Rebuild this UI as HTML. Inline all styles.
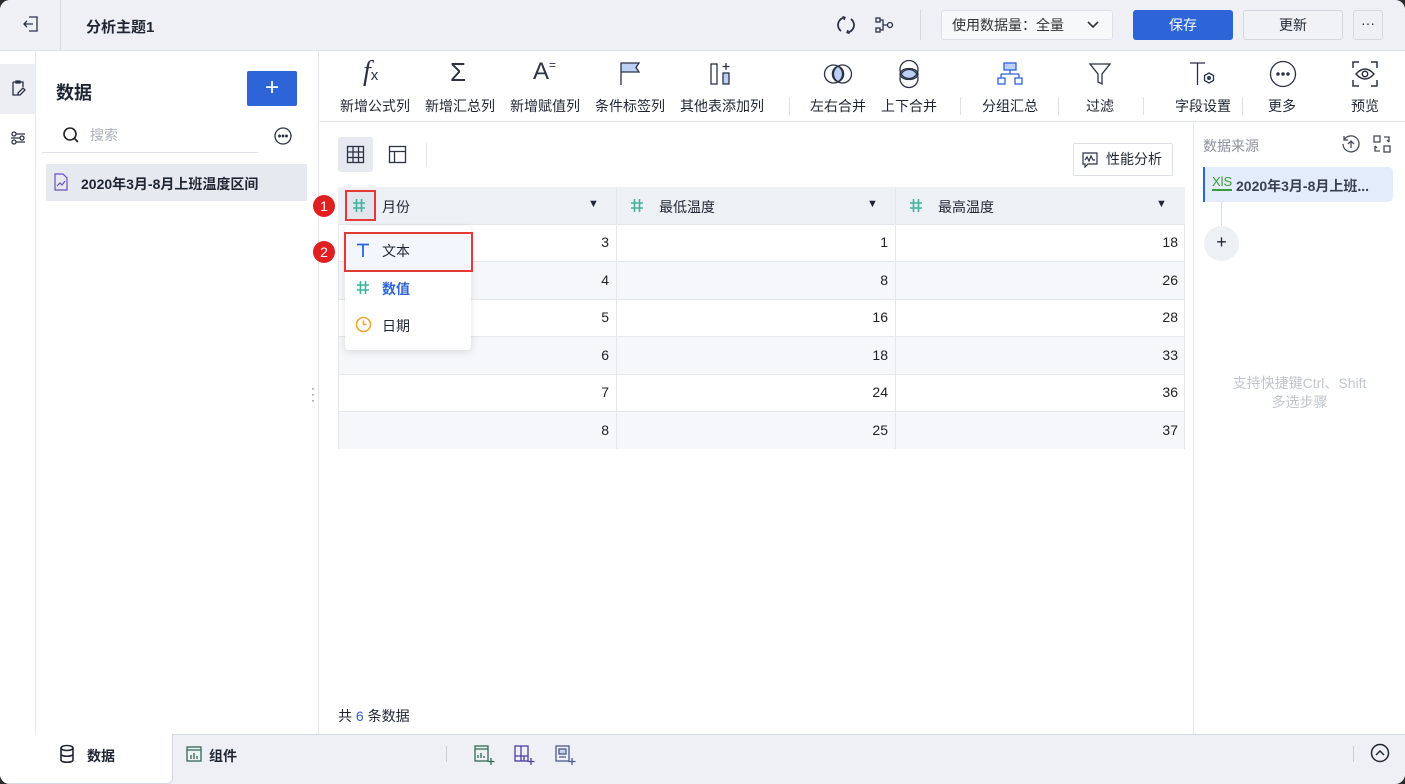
<!DOCTYPE html>
<html><head><meta charset="utf-8"><style>
*{margin:0;padding:0;box-sizing:border-box}
body{width:1405px;height:784px;overflow:hidden;background:#2b2b2b;font-family:"Liberation Sans","Noto Sans CJK SC",sans-serif;color:#1f2633;font-size:14px}
.app{position:absolute;left:0;top:0;width:1405px;height:784px;background:#fff;border-radius:10px;overflow:hidden}
.a{position:absolute}
.tb{text-align:center;font-size:14px;color:#1f2633;width:90px;margin-left:-45px;top:96px}
.sep{position:absolute;top:97px;width:1px;height:18px;background:#dde0e6}
.cell{position:absolute;height:37px;line-height:37px;text-align:right;font-size:14px;color:#222}
</style></head><body><div class="app">
<svg width="0" height="0" style="position:absolute"><defs><g id="hash"><path d="M5.5 2v13M10.5 2v13M2 6h12M2 11h12" stroke="#3fb39b" stroke-width="1.6" fill="none"/></g></defs></svg>
<!-- top bar -->
<div class="a" style="left:0;top:0;width:1405px;height:51px;background:#eef0f5;border-bottom:1px solid #dde1e8"></div>
<div class="a" style="left:60px;top:0;width:1px;height:50px;background:#d8dce3"></div>
<svg class="a" style="left:21px;top:14px" width="20" height="20" viewBox="0 0 20 20" fill="none" stroke="#2a3244" stroke-width="1.3"><path d="M8 3h8v14H8M3 10h9M6 7l-3 3 3 3"/></svg>
<div class="a" style="left:86px;top:16px;font-size:15px;font-weight:bold">分析主题1</div>
<svg class="a" style="left:835px;top:14px" width="22" height="22" viewBox="0 0 22 22" fill="none" stroke="#2a3244" stroke-width="1.8"><path d="M16 5a7.5 7.5 0 0 1-4 13.5M6 17A7.5 7.5 0 0 1 10 3.5"/><path d="M13 16l-1 2.5 2.5 1M9 6l1-2.5-2.5-1" stroke-width="1.4"/></svg>
<svg class="a" style="left:874px;top:15px" width="22" height="20" viewBox="0 0 22 20" fill="none" stroke="#2a3244" stroke-width="1.3"><rect x="2" y="3" width="4" height="4"/><rect x="2" y="13" width="4" height="4"/><circle cx="16" cy="10" r="2.5"/><path d="M6 5h3v10H6M9 10h4.5"/></svg>
<div class="a" style="left:920px;top:10px;width:1px;height:30px;background:#d3d7de"></div>
<div class="a" style="left:941px;top:10px;width:172px;height:30px;background:#f7f8fa;border:1px solid #dde0e6;border-radius:3px;line-height:28px;padding-left:10px;font-size:14px;color:#333">使用数据量：全量<svg style="position:absolute;left:144px;top:8px" width="14" height="12" viewBox="0 0 14 12" fill="none" stroke="#333" stroke-width="1.6"><path d="M2 3l5 5 5-5"/></svg></div>
<div class="a" style="left:1133px;top:10px;width:100px;height:30px;background:#2d64d8;border-radius:3px;color:#fff;text-align:center;line-height:30px;font-size:14px">保存</div>
<div class="a" style="left:1243px;top:10px;width:100px;height:30px;background:#f1f2f5;border:1px solid #d5d8de;border-radius:3px;text-align:center;line-height:28px;font-size:14px">更新</div>
<div class="a" style="left:1353px;top:10px;width:30px;height:30px;border:1px solid #d5d8de;border-radius:3px;text-align:center;line-height:24px;font-size:14px">···</div>
<!-- left strip -->
<div class="a" style="left:0;top:51px;width:36px;height:683px;border-right:1px solid #e5e8ee"></div>
<div class="a" style="left:0;top:64px;width:35px;height:50px;background:#eceef3"></div>
<svg class="a" style="left:9px;top:79px" width="18" height="18" viewBox="0 0 18 18" fill="none" stroke="#2a3244" stroke-width="1.3"><path d="M4 3h10v5M4 3v13h5M7 2h4v2H7zM9 14l5-5 2 2-5 5H9z"/></svg>
<svg class="a" style="left:9px;top:129px" width="18" height="18" viewBox="0 0 18 18" fill="none" stroke="#2a3244" stroke-width="1.3"><circle cx="5" cy="5" r="2"/><circle cx="13" cy="9" r="2"/><circle cx="5" cy="13" r="2"/><path d="M7 5h9M2 9h9M7 13h9"/></svg>
<!-- left panel -->
<div class="a" style="left:318px;top:51px;width:1px;height:683px;background:#e3e6eb"></div>
<div class="a" style="left:56px;top:79px;font-size:18px;font-weight:bold">数据</div>
<div class="a" style="left:247px;top:71px;width:50px;height:35px;background:#2d64d8;border-radius:2px;color:#fff;font-size:24px;text-align:center;line-height:33px">+</div>
<svg class="a" style="left:62px;top:126px" width="18" height="18" viewBox="0 0 18 18" fill="none" stroke="#222" stroke-width="1.6"><circle cx="8" cy="8" r="6"/><path d="M12.5 12.5L16 16"/></svg>
<div class="a" style="left:90px;top:125px;font-size:14px;color:#aab0ba">搜索</div>
<div class="a" style="left:42px;top:152px;width:216px;height:1px;background:#dfe2e8"></div>
<svg class="a" style="left:273px;top:126px" width="20" height="20" viewBox="0 0 20 20" fill="none" stroke="#2a3244" stroke-width="1.3"><circle cx="10" cy="10" r="8"/><circle cx="6.5" cy="10" r=".8" fill="#2a3244"/><circle cx="10" cy="10" r=".8" fill="#2a3244"/><circle cx="13.5" cy="10" r=".8" fill="#2a3244"/></svg>
<div class="a" style="left:46px;top:164px;width:261px;height:37px;background:#e6e9f0"></div>
<svg class="a" style="left:53px;top:173px" width="16" height="18" viewBox="0 0 16 18" fill="none" stroke="#6a4fc0" stroke-width="1.2"><path d="M2 1h8l4 4v12H2z"/><path d="M4 13l3-3 2 2 3-4"/></svg>
<div class="a" style="left:81px;top:174px;font-size:14px;font-weight:bold">2020年3月-8月上班温度区间</div>
<div class="a" style="left:311px;top:385px;color:#555;font-size:12px;line-height:6px">·<br>·<br>·</div>
<!-- toolbar -->
<div class="a" style="left:319px;top:121px;width:1086px;height:1px;background:#e3e6eb"></div>
<div class="a" style="left:363px;top:56px;font-size:28px;font-style:italic;font-family:'Liberation Serif',serif;color:#2a3244">f<span style="font-size:15px;font-style:normal;font-family:'Liberation Sans'">x</span></div>
<div class="a" style="left:450px;top:57px;font-size:26px;color:#2a3244">Σ</div>
<div class="a" style="left:533px;top:58px;font-size:24px;color:#2a3244">A<span style="font-size:12px;vertical-align:top">=</span></div>
<svg class="a" style="left:618px;top:61px" width="24" height="26" viewBox="0 0 24 26" fill="none" stroke="#2a3244" stroke-width="1.3"><path d="M3 24V2h18l-3 4.5 3 4.5H3" fill="#bcd0f5"/></svg>
<svg class="a" style="left:708px;top:61px" width="28" height="26" viewBox="0 0 28 26" fill="none" stroke="#2a3244" stroke-width="1.3"><rect x="3" y="3" width="6" height="20"/><rect x="15" y="12" width="6" height="11" fill="#bcd0f5"/><path d="M18 2v7M14.5 5.5h7"/></svg>
<div class="sep" style="left:789px"></div>
<svg class="a" style="left:823px;top:60px" width="30" height="28" viewBox="0 0 30 28" fill="none" stroke="#2a3244" stroke-width="1.3"><path d="M15 6a8.5 8.5 0 0 1 0 16a8.5 8.5 0 0 1 0-16" fill="#bcd0f5"/><circle cx="10.5" cy="14" r="9"/><circle cx="19.5" cy="14" r="9"/></svg>
<svg class="a" style="left:895px;top:58px" width="28" height="32" viewBox="0 0 28 32" fill="none" stroke="#2a3244" stroke-width="1.3"><path d="M5 16a9 5.5 0 0 1 18 0a9 5.5 0 0 1-18 0" fill="#bcd0f5"/><circle cx="14" cy="11.5" r="9"/><circle cx="14" cy="20.5" r="9"/></svg>
<div class="sep" style="left:960px"></div>
<svg class="a" style="left:996px;top:61px" width="28" height="26" viewBox="0 0 28 26" fill="none" stroke="#2d64d8" stroke-width="1.3"><rect x="8" y="2" width="12" height="7" fill="#bcd0f5"/><path d="M14 9v4M5 13h18M5 13v4M23 13v4"/><rect x="2" y="17" width="7" height="6"/><rect x="19" y="17" width="7" height="6"/></svg>
<div class="sep" style="left:1058px"></div>
<svg class="a" style="left:1087px;top:61px" width="26" height="26" viewBox="0 0 26 26" fill="none" stroke="#2a3244" stroke-width="1.3"><path d="M3 3h20l-8 10v10l-4-2v-8z"/></svg>
<div class="sep" style="left:1143px"></div>
<svg class="a" style="left:1188px;top:60px" width="30" height="28" viewBox="0 0 30 28" fill="none" stroke="#2a3244" stroke-width="1.3"><path d="M2 3h15M9.5 3v22"/><path d="M21 13l4.5 2.5v5L21 23l-4.5-2.5v-5z"/><circle cx="21" cy="18" r="1.3" fill="#2d64d8"/></svg>
<div class="sep" style="left:1242px"></div>
<svg class="a" style="left:1268px;top:59px" width="30" height="30" viewBox="0 0 30 30" fill="none" stroke="#2a3244" stroke-width="1.3"><circle cx="15" cy="15" r="12.5"/><circle cx="10" cy="15" r="1.1" fill="#2a3244"/><circle cx="15" cy="15" r="1.1" fill="#2a3244"/><circle cx="20" cy="15" r="1.1" fill="#2a3244"/></svg>
<svg class="a" style="left:1351px;top:60px" width="28" height="28" viewBox="0 0 28 28" fill="none" stroke="#2a3244" stroke-width="1.5"><path d="M2 8V2h6M20 2h6v6M26 20v6h-6M8 26H2v-6"/><path d="M5 14q9-10 18 0q-9 10-18 0z"/><circle cx="14" cy="14" r="2.7"/></svg>
<div class="a tb" style="left:375px">新增公式列</div>
<div class="a tb" style="left:460px">新增汇总列</div>
<div class="a tb" style="left:545px">新增赋值列</div>
<div class="a tb" style="left:630px">条件标签列</div>
<div class="a tb" style="left:722px;width:100px;margin-left:-50px">其他表添加列</div>
<div class="a tb" style="left:838px">左右合并</div>
<div class="a tb" style="left:909px">上下合并</div>
<div class="a tb" style="left:1010px">分组汇总</div>
<div class="a tb" style="left:1100px">过滤</div>
<div class="a tb" style="left:1203px">字段设置</div>
<div class="a tb" style="left:1282px">更多</div>
<div class="a tb" style="left:1365px">预览</div>
<!-- main -->
<div class="a" style="left:338px;top:137px;width:35px;height:35px;background:#e6e9ef;border-radius:3px"></div>
<svg class="a" style="left:346px;top:145px" width="19" height="19" viewBox="0 0 19 19" fill="none" stroke="#2a3244" stroke-width="1.3"><rect x="1.5" y="1.5" width="16" height="16"/><path d="M1.5 7h16M1.5 12.5h16M7 1.5v16M12.5 1.5v16"/></svg>
<svg class="a" style="left:388px;top:145px" width="19" height="19" viewBox="0 0 19 19" fill="none" stroke="#2a3244" stroke-width="1.3"><rect x="1.5" y="1.5" width="16" height="16"/><path d="M1.5 6.5h16M6.5 6.5v11"/></svg>
<div class="a" style="left:426px;top:143px;width:1px;height:24px;background:#e3e6eb"></div>
<div class="a" style="left:1073px;top:143px;width:100px;height:33px;border:1px solid #dcdfe5;border-radius:2px;line-height:31px;padding-left:32px;font-size:14px">性能分析<svg style="position:absolute;left:8px;top:8px" width="16" height="16" viewBox="0 0 16 16" fill="none" stroke="#2a3244" stroke-width="1.2"><path d="M1 1h14v11H6l-3 3v-3H1z"/><path d="M3 8l2-3 2 4 2-5 2 4h2"/></svg></div>
<!-- table -->
<div class="a" style="left:338px;top:187px;width:847px;height:262px;border:1px solid #e4e7ec;background:#fff"></div>
<div class="a" style="left:338px;top:187px;width:847px;height:37px;background:#edf0f5"></div>
<div class="a" style="left:339px;top:262px;width:845px;height:37px;background:#f6f7fa"></div>
<div class="a" style="left:339px;top:337px;width:845px;height:37px;background:#f6f7fa"></div>
<div class="a" style="left:339px;top:412px;width:845px;height:37px;background:#f6f7fa"></div>
<div class="a" style="left:339px;top:224px;width:845px;height:1px;background:#e4e7ec"></div>
<div class="a" style="left:339px;top:261px;width:845px;height:1px;background:#e4e7ec"></div>
<div class="a" style="left:339px;top:299px;width:845px;height:1px;background:#e4e7ec"></div>
<div class="a" style="left:339px;top:336px;width:845px;height:1px;background:#e4e7ec"></div>
<div class="a" style="left:339px;top:374px;width:845px;height:1px;background:#e4e7ec"></div>
<div class="a" style="left:339px;top:411px;width:845px;height:1px;background:#e4e7ec"></div>
<div class="a" style="left:616px;top:187px;width:1px;height:262px;background:#e4e7ec"></div>
<div class="a" style="left:895px;top:187px;width:1px;height:262px;background:#e4e7ec"></div>
<div class="a" style="left:345px;top:190px;width:31px;height:31px;border:2px solid #e53935;background:#e2e5eb"></div>
<svg class="a" style="left:351px;top:197px" width="16" height="17"><use href="#hash"/></svg>
<div class="a" style="left:382px;top:197px">月份</div>
<div class="a" style="left:588px;top:198px;font-size:11px">▼</div>
<svg class="a" style="left:629px;top:197px" width="16" height="17"><use href="#hash"/></svg>
<div class="a" style="left:659px;top:197px">最低温度</div>
<div class="a" style="left:867px;top:198px;font-size:11px">▼</div>
<svg class="a" style="left:908px;top:197px" width="16" height="17"><use href="#hash"/></svg>
<div class="a" style="left:938px;top:197px">最高温度</div>
<div class="a" style="left:1156px;top:198px;font-size:11px">▼</div>
<div class="a" style="left:313px;top:195px;width:22px;height:22px;border-radius:50%;background:#e02020;color:#fff;font-size:14px;text-align:center;line-height:22px">1</div>
<div class="a" style="left:313px;top:241px;width:22px;height:22px;border-radius:50%;background:#e02020;color:#fff;font-size:14px;text-align:center;line-height:22px">2</div>
<div class="cell" style="left:340px;top:224px;width:269px">3</div><div class="cell" style="left:618px;top:224px;width:270px">1</div><div class="cell" style="left:897px;top:224px;width:281px">18</div>
<div class="cell" style="left:340px;top:262px;width:269px">4</div><div class="cell" style="left:618px;top:262px;width:270px">8</div><div class="cell" style="left:897px;top:262px;width:281px">26</div>
<div class="cell" style="left:340px;top:299px;width:269px">5</div><div class="cell" style="left:618px;top:299px;width:270px">16</div><div class="cell" style="left:897px;top:299px;width:281px">28</div>
<div class="cell" style="left:340px;top:337px;width:269px">6</div><div class="cell" style="left:618px;top:337px;width:270px">18</div><div class="cell" style="left:897px;top:337px;width:281px">33</div>
<div class="cell" style="left:340px;top:374px;width:269px">7</div><div class="cell" style="left:618px;top:374px;width:270px">24</div><div class="cell" style="left:897px;top:374px;width:281px">36</div>
<div class="cell" style="left:340px;top:412px;width:269px">8</div><div class="cell" style="left:618px;top:412px;width:270px">25</div><div class="cell" style="left:897px;top:412px;width:281px">37</div>
<!-- dropdown -->
<div class="a" style="left:345px;top:226px;width:126px;height:124px;background:#fff;border-radius:4px;box-shadow:0 2px 8px rgba(0,0,0,.12)"></div>
<div class="a" style="left:344px;top:232px;width:129px;height:40px;border:2px solid #e53935;background:#f3f7fd"></div>
<svg class="a" style="left:355px;top:242px" width="16" height="16" viewBox="0 0 16 16" fill="none" stroke="#2d64d8" stroke-width="1.8"><path d="M2 2.5h12M8 2.5V15"/></svg>
<div class="a" style="left:382px;top:241px">文本</div>
<svg class="a" style="left:355px;top:279px" width="16" height="17"><use href="#hash"/></svg>
<div class="a" style="left:382px;top:279px;color:#2d64d8;font-weight:bold">数值</div>
<svg class="a" style="left:355px;top:316px" width="17" height="17" viewBox="0 0 17 17" fill="none" stroke="#f0a733" stroke-width="1.6"><circle cx="8.5" cy="8.5" r="7"/><path d="M8.5 4.5v4h3"/></svg>
<div class="a" style="left:382px;top:316px">日期</div>
<div class="a" style="left:338px;top:706px;font-size:14px">共<span style="color:#2d64d8"> 6 </span>条数据</div>
<!-- right panel -->
<div class="a" style="left:1193px;top:122px;width:1px;height:612px;background:#e3e6eb"></div>
<div class="a" style="left:1203px;top:136px;font-size:14px;color:#8a909c">数据来源</div>
<svg class="a" style="left:1341px;top:134px" width="20" height="20" viewBox="0 0 20 20" fill="none" stroke="#444c5a" stroke-width="1.3"><path d="M3 6a8 8 0 1 1-1 4M3 2v4h4M10 14V7M7 10l3-3 3 3"/></svg>
<svg class="a" style="left:1372px;top:134px" width="20" height="20" viewBox="0 0 20 20" fill="none" stroke="#444c5a" stroke-width="1.3"><rect x="2" y="2" width="6" height="6"/><rect x="12" y="12" width="6" height="6"/><path d="M12 3h5v5M15 6l2 2M8 17H3v-5M5 14l-2-2"/></svg>
<div class="a" style="left:1203px;top:167px;width:190px;height:35px;background:#e3ecfb;border-left:2px solid #2d64d8;border-radius:0 5px 5px 0"></div>
<div class="a" style="left:1212px;top:175px;color:#3a9a3a;font-size:13px;border-bottom:2px solid #3a9a3a;line-height:14px">XlS</div>
<div class="a" style="left:1236px;top:176px;font-size:14px;font-weight:bold;color:#3a4252">2020年3月-8月上班...</div>
<div class="a" style="left:1221px;top:202px;width:1px;height:24px;background:#d8dce3"></div>
<div class="a" style="left:1204px;top:226px;width:35px;height:35px;border-radius:50%;background:#edf0f5;text-align:center;line-height:33px;font-size:18px">+</div>
<div class="a" style="left:1194px;top:374px;width:211px;text-align:center;font-size:14px;color:#c0c4cc;line-height:19px">支持快捷键Ctrl、Shift<br>多选步骤</div>
<!-- bottom -->
<div class="a" style="left:0;top:734px;width:1405px;height:50px;background:#eef0f5;border-top:1px solid #d5d9e1"></div>
<div class="a" style="left:0;top:734px;width:173px;height:50px;background:#fff;border-right:1px solid #d5d9e1;border-bottom:1px solid #d5d9e1;border-radius:0 0 6px 0"></div>
<svg class="a" style="left:58px;top:744px" width="18" height="20" viewBox="0 0 18 20" fill="none" stroke="#1f2633" stroke-width="1.6"><ellipse cx="9" cy="4" rx="6" ry="2.5"/><path d="M3 4v12c0 3 12 3 12 0V4M3 10c0 3 12 3 12 0"/></svg>
<div class="a" style="left:87px;top:746px;font-weight:bold;font-size:14px">数据</div>
<svg class="a" style="left:185px;top:745px" width="18" height="18" viewBox="0 0 18 18" fill="none" stroke="#2e6b50" stroke-width="1.3"><rect x="2" y="2" width="14" height="14"/><path d="M2 5h14M6 14V10M9 14V8M12 14V11"/></svg>
<div class="a" style="left:209px;top:746px;font-weight:bold;font-size:14px">组件</div>
<div class="a" style="left:446px;top:746px;width:1px;height:16px;background:#c9cdd4"></div>
<svg class="a" style="left:473px;top:744px" width="22" height="22" viewBox="0 0 22 22" fill="none" stroke="#2e6b50" stroke-width="1.3"><rect x="2" y="2" width="13" height="15"/><path d="M2 5h13M5 14v-3M8 14V9M11 14v-2M18 14v7M14.5 17.5h7"/></svg>
<svg class="a" style="left:513px;top:744px" width="22" height="22" viewBox="0 0 22 22" fill="none" stroke="#4b3ea8" stroke-width="1.3"><rect x="2" y="2" width="13" height="15"/><path d="M2 12h13M8 2v15M11 12v5M18 14v7M14.5 17.5h7"/></svg>
<svg class="a" style="left:554px;top:744px" width="22" height="22" viewBox="0 0 22 22" fill="none" stroke="#4a5a8a" stroke-width="1.3"><rect x="2" y="2" width="13" height="15"/><rect x="5" y="5" width="7" height="5" fill="#c5d3ee"/><path d="M5 13h7M18 14v7M14.5 17.5h7"/></svg>
<div class="a" style="left:1353px;top:746px;width:1px;height:16px;background:#c9cdd4"></div>
<svg class="a" style="left:1370px;top:743px" width="20" height="20" viewBox="0 0 20 20" fill="none" stroke="#1f2633" stroke-width="1.5"><circle cx="10" cy="10" r="8.5"/><path d="M6 12l4-4 4 4"/></svg>
</div></body></html>
